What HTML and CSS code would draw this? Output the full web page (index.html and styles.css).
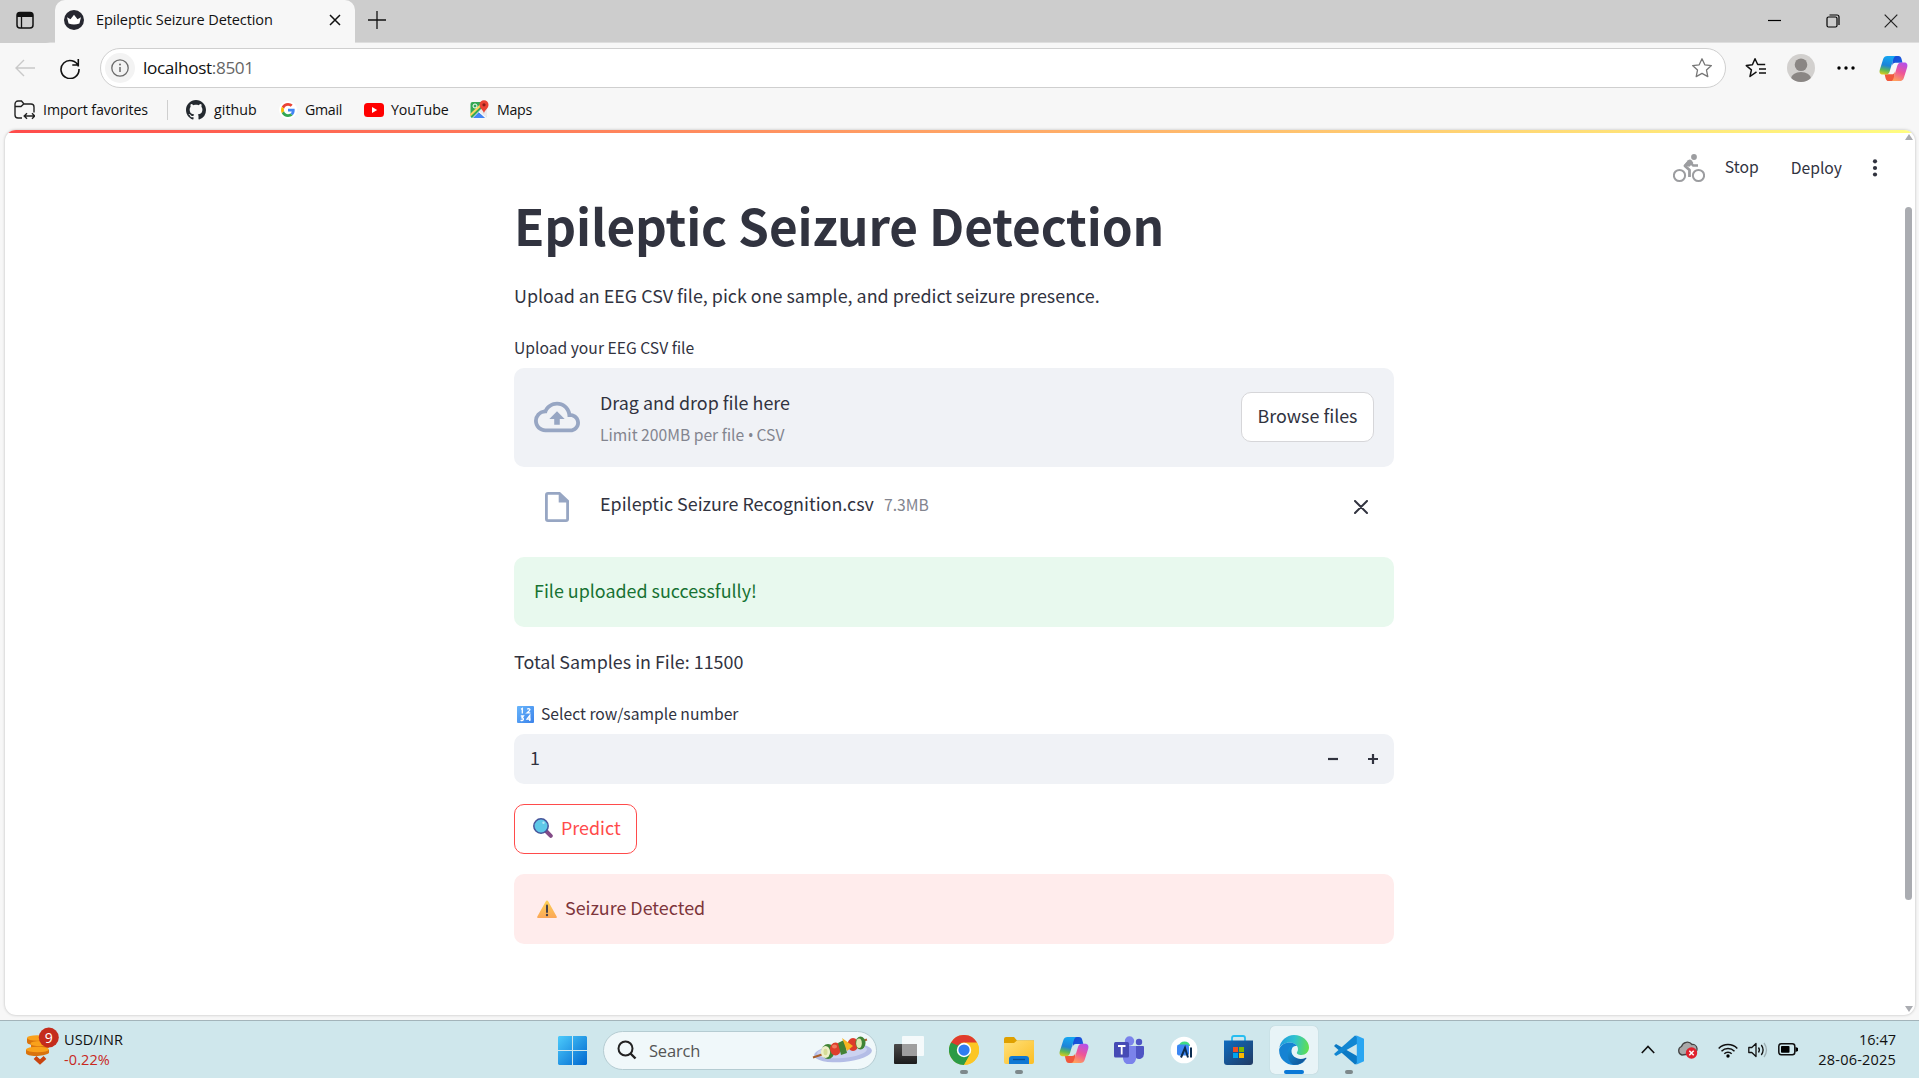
FILE: index.html
```html
<!DOCTYPE html>
<html lang="en">
<head>
<meta charset="utf-8">
<title>Epileptic Seizure Detection</title>
<link rel="stylesheet" href="styles.css">
</head>
<body>
<svg class="defs" width="0" height="0">
  <defs>
    <linearGradient id="cpA" x1="0.2" y1="0" x2="0" y2="1"><stop offset="0" stop-color="#15a4f0"/><stop offset=".45" stop-color="#1d83d8"/><stop offset=".72" stop-color="#5fb855"/><stop offset="1" stop-color="#f2cf14"/></linearGradient>
    <linearGradient id="cpB" x1="0.7" y1="0" x2="0.3" y2="1"><stop offset="0" stop-color="#b650e8"/><stop offset=".5" stop-color="#ee5697"/><stop offset="1" stop-color="#ffa25c"/></linearGradient>
    <linearGradient id="cpC" x1="0" y1="0" x2="1" y2="1"><stop offset="0" stop-color="#1749d6"/><stop offset="1" stop-color="#1a5fe0"/></linearGradient>
    <linearGradient id="win" x1="0" y1="0" x2="1" y2="1"><stop offset="0" stop-color="#4ccbfb"/><stop offset="1" stop-color="#0067cf"/></linearGradient>
    <linearGradient id="fold" x1="0" y1="0" x2="1" y2="1"><stop offset="0" stop-color="#ffe07a"/><stop offset="1" stop-color="#fcbe23"/></linearGradient>
    <linearGradient id="store" x1="0" y1="0" x2="1" y2="1"><stop offset="0" stop-color="#0f6cc0"/><stop offset="1" stop-color="#213a63"/></linearGradient>
    <linearGradient id="edgeT" x1="0" y1=".4" x2="1" y2=".5"><stop offset="0" stop-color="#1f9be0"/><stop offset=".5" stop-color="#2fc2cf"/><stop offset="1" stop-color="#62e04d"/></linearGradient>
    <linearGradient id="edgeB" x1="0" y1="0" x2="1" y2="1"><stop offset="0" stop-color="#1495df"/><stop offset="1" stop-color="#114a8b"/></linearGradient>
    <linearGradient id="dark" x1="0" y1="0" x2="0" y2="1"><stop offset="0" stop-color="#4a4a4a"/><stop offset="1" stop-color="#1c1c1c"/></linearGradient>
    <linearGradient id="num" x1="0" y1="0" x2="1" y2="1"><stop offset="0" stop-color="#68b5fb"/><stop offset="1" stop-color="#3b82ea"/></linearGradient>
    <linearGradient id="warn" x1="0" y1="0" x2="0" y2="1"><stop offset="0" stop-color="#fdd155"/><stop offset="1" stop-color="#fba757"/></linearGradient>
    <symbol id="copilot" viewBox="0 0 30 28">
      <path d="M14 1h6c2 0 2.800 1.300 3.300 3l1 4H17c-2 0-2.800 1-3.300 3z" fill="url(#cpC)"/>
      <path d="M16 27h-6c-2 0-2.600-1.300-3.200-3l-1-4H13c2 0 2.800-1 3.300-3z" fill="#f0583c"/>
      <path d="M8.500 1H18c-1.800 0-2.500 1.300-3.200 3.500L11 17c-.7 2.200-2 3.200-4 3.200H4c-3 0-4-2.200-3.200-5L4.300 4.200C5 2 6.500 1 8.500 1z" fill="url(#cpA)"/>
      <path d="M21.500 27H12c1.800 0 2.500-1.300 3.200-3.500L19 11c.7-2.200 2-3.200 4-3.200h3c3 0 4 2.200 3.200 5l-3.500 11C25 26 23.500 27 21.500 27z" fill="url(#cpB)"/>
    </symbol>
  </defs>
</svg>

<header class="tabbar">
  <div class="tab-actions"><svg width="20" height="20" viewBox="0 0 20 20"><rect x="2" y="2.500" width="16" height="15.500" rx="3" fill="none" stroke="#111" stroke-width="1.500"/><path d="M2 7V5a3 3 0 0 1 3-3h10a3 3 0 0 1 3 3v2z" fill="#111"/><path d="M6.500 6v12" stroke="#111" stroke-width="1.300"/></svg></div>
  <div class="tab">
    <svg class="favicon" width="20" height="20" viewBox="0 0 20 20"><circle cx="10" cy="10" r="10" fill="#262730"/><path d="M3 7.300l3.500 2L10 4.800l3.500 4.500 3.500-2-1.600 6.200q-5.400 1.800-10.800 0z" fill="#fff"/></svg>
    <span class="tab-title">Epileptic Seizure Detection</span>
    <svg class="tab-close" width="12" height="12" viewBox="0 0 12 12"><path d="M1 1l10 10M11 1L1 11" stroke="#111" stroke-width="1.500"/></svg>
  </div>
  <svg class="new-tab" width="18" height="18" viewBox="0 0 18 18"><path d="M9 0v18M0 9h18" stroke="#111" stroke-width="1.300"/></svg>
  <div class="window-buttons">
    <svg width="14" height="14" viewBox="0 0 14 14"><path d="M0 6.500h13" stroke="#000" stroke-width="1.200"/></svg>
    <svg width="14" height="14" viewBox="0 0 14 14"><rect x="1" y="3" width="10" height="10" rx="1.500" fill="none" stroke="#000" stroke-width="1.200"/><path d="M3.500 1H11a2 2 0 0 1 2 2v8" fill="none" stroke="#000" stroke-width="1.200"/></svg>
    <svg width="14" height="14" viewBox="0 0 14 14"><path d="M.7.7l12.600 12.600M13.300.7L.7 13.300" stroke="#222" stroke-width="1.200"/></svg>
  </div>
</header>

<div class="toolbar">
  <svg class="back" width="20" height="18" viewBox="0 0 20 18"><path d="M20 9H1M9 1L1 9l8 8" fill="none" stroke="#c9c9c9" stroke-width="1.400"/></svg>
  <svg class="reload" width="22" height="22" viewBox="0 0 22 22"><path d="M19.500 9.500A9 9 0 1 0 20 12M19.300 2v6h-6" fill="none" stroke="#111" stroke-width="1.600"/></svg>
  <div class="address">
    <span class="site-info"><svg width="18" height="18" viewBox="0 0 18 18"><circle cx="9" cy="9" r="8.200" fill="none" stroke="#6b6b6b" stroke-width="1.300"/><path d="M9 8v5" stroke="#6b6b6b" stroke-width="1.500"/><circle cx="9" cy="5.600" r="1" fill="#6b6b6b"/></svg></span>
    <span class="url">localhost<span class="port">:8501</span></span>
    <svg class="star" width="22" height="22" viewBox="0 0 22 22"><path d="M11 1.800l2.800 6 6.600.8-4.900 4.500 1.300 6.500-5.800-3.200-5.800 3.200 1.300-6.500L1.600 8.600l6.600-.8z" fill="none" stroke="#777" stroke-width="1.300" stroke-linejoin="round"/></svg>
  </div>
  <div class="toolbar-right">
    <svg class="fav-list" width="22" height="22" viewBox="0 0 22 22"><path d="M11.500 14.800L5 19.500l1.400-6.700L1.300 8.600l6.100-.8L10 1.800l2.700 5.700h7.500M14 12h7M14 16h7" fill="none" stroke="#111" stroke-width="1.500" stroke-linejoin="round"/></svg>
    <svg class="avatar" width="28" height="28" viewBox="0 0 28 28"><defs><clipPath id="av"><circle cx="14" cy="14" r="14"/></clipPath></defs><g clip-path="url(#av)"><rect width="28" height="28" fill="#d2d0ce"/><circle cx="14" cy="10.700" r="6.300" fill="#8a8684"/><ellipse cx="14" cy="24.500" rx="10" ry="6.500" fill="#8a8684"/></g></svg>
    <svg class="more" width="18" height="4" viewBox="0 0 18 4"><circle cx="2" cy="2" r="1.700"/><circle cx="9" cy="2" r="1.700"/><circle cx="16" cy="2" r="1.700"/></svg>
    <svg class="cp" width="29" height="27"><use href="#copilot"/></svg>
  </div>
</div>

<nav class="favorites">
  <span class="fav import"><svg width="21" height="20" viewBox="0 0 21 20"><path d="M8 18H4a3 3 0 0 1-3-3V4a3 3 0 0 1 3-3h3.500l2.500 3h7a3 3 0 0 1 3 3v5.500M1 6.500h6l2.700-2.500M10.500 16h10M13 13.200L10.200 16l2.800 2.800M18 13.200l2.800 2.800-2.800 2.800" fill="none" stroke="#222" stroke-width="1.400"/></svg><span>Import favorites</span></span>
  <i class="sep"></i>
  <span class="fav github"><svg width="20" height="20" viewBox="0 0 16 16"><path fill="#24292f" d="M8 0C3.580 0 0 3.580 0 8c0 3.540 2.290 6.530 5.470 7.590.4.070.55-.17.55-.38 0-.19-.01-.82-.01-1.490-2.010.37-2.530-.49-2.690-.94-.09-.23-.48-.94-.82-1.130-.28-.15-.68-.52-.01-.53.63-.01 1.080.58 1.230.82.72 1.210 1.870.87 2.330.66.070-.52.28-.87.51-1.070-1.780-.2-3.640-.89-3.640-3.950 0-.87.31-1.590.82-2.150-.08-.2-.36-1.020.08-2.120 0 0 .67-.21 2.200.82.64-.18 1.320-.27 2-.27s1.360.09 2 .27c1.530-1.040 2.200-.82 2.200-.82.44 1.100.16 1.920.08 2.120.51.56.82 1.270.82 2.150 0 3.070-1.870 3.750-3.650 3.950.29.25.54.73.54 1.480 0 1.070-.01 1.930-.01 2.200 0 .21.15.46.55.38A8.010 8.010 0 0 0 16 8c0-4.420-3.580-8-8-8z"/></svg><span>github</span></span>
  <span class="fav gmail"><svg width="18" height="18" viewBox="-7 -7 62 62"><circle cx="24" cy="24" r="31" fill="#fff"/><path fill="#ea4335" d="M24 9.500c3.540 0 6.710 1.220 9.210 3.600l6.850-6.850C35.900 2.380 30.470 0 24 0 14.620 0 6.510 5.380 2.560 13.220l7.980 6.190C12.430 13.720 17.740 9.500 24 9.500z"/><path fill="#4285f4" d="M46.980 24.550c0-1.570-.15-3.090-.38-4.550H24v9.020h12.940c-.58 2.960-2.260 5.480-4.780 7.180l7.730 6c4.510-4.180 7.090-10.360 7.090-17.650z"/><path fill="#fbbc05" d="M10.530 28.590c-.48-1.450-.76-2.990-.76-4.590s.27-3.140.76-4.590l-7.980-6.190C.92 16.460 0 20.120 0 24c0 3.880.92 7.540 2.560 10.780l7.970-6.190z"/><path fill="#34a853" d="M24 48c6.480 0 11.930-2.130 15.890-5.810l-7.730-6c-2.150 1.450-4.920 2.300-8.160 2.300-6.260 0-11.570-4.220-13.470-9.910l-7.980 6.190C6.510 42.620 14.620 48 24 48z"/></svg><span>Gmail</span></span>
  <span class="fav youtube"><svg width="20" height="14" viewBox="0 0 20 14"><rect width="20" height="14" rx="3.500" fill="#f00"/><path d="M8 4l5.200 3L8 10z" fill="#fff"/></svg><span>YouTube</span></span>
  <span class="fav maps"><svg width="19" height="19" viewBox="0 0 19 19"><rect x=".5" y="2" width="16" height="16" rx="2" fill="#34a853"/><path d="M2 18L14 6l3 3v7a2 2 0 0 1-2 2z" fill="#e8eaed"/><path d="M3 18l6-6 6 6z" fill="#4285f4"/><path d="M0 15.500L13 3" stroke="#fdd663" stroke-width="2"/><path d="M9 12l7.500 6" stroke="#fff" stroke-width="1"/><circle cx="5" cy="6" r="2" fill="none" stroke="#fff"/><path d="M14 14c0-4-4.500-5-4.500-9.200a4.500 4.500 0 0 1 9 0C18.500 9 14 10 14 14z" fill="#ea4335"/><circle cx="14" cy="4.800" r="1.600" fill="#8c1d18"/></svg><span>Maps</span></span>
</nav>

<main class="viewport">
  <div class="progress"></div>
  <div class="scrollbar"><i class="up"></i><i class="thumb"></i><i class="down"></i></div>
  <div class="app-header">
    <svg class="bike" width="32" height="29" viewBox="0 0 32 29"><g fill="none" stroke="#9c9da0"><circle cx="6.500" cy="21.500" r="5.600" stroke-width="2"/><circle cx="25.500" cy="21.500" r="5.600" stroke-width="2"/><path d="M16.500 7.500L12 12l4.500 4V23" stroke-width="2.800" stroke-linejoin="round"/><path d="M16.500 7L20 11.500h5" stroke-width="2.500" stroke-linejoin="round"/></g><path d="M10.500 11.500L15 6.200q2-1.700 3.800.3l1.500 2.500-4 3.800z" fill="#9c9da0"/><circle cx="21" cy="3" r="2.900" fill="#9c9da0"/></svg>
    <span class="stop">Stop</span>
    <span class="deploy">Deploy</span>
    <svg class="kebab" width="6" height="18" viewBox="0 0 6 18"><circle cx="3" cy="2.300" r="2.100"/><circle cx="3" cy="9" r="2.100"/><circle cx="3" cy="15.500" r="2.100"/></svg>
  </div>
  <section class="app">
    <h1>Epileptic Seizure Detection</h1>
    <p class="intro">Upload an EEG CSV file, pick one sample, and predict seizure presence.</p>
    <label class="field-label">Upload your EEG CSV file</label>
    <div class="dropzone">
      <svg width="46" height="46" viewBox="0 0 24 24"><path fill="#97a6c3" d="M19.350 10.040A7.490 7.490 0 0 0 12 4C9.110 4 6.600 5.640 5.350 8.040A5.994 5.994 0 0 0 0 14c0 3.310 2.690 6 6 6h13c2.760 0 5-2.240 5-5 0-2.640-2.050-4.780-4.650-4.960zM19 18H6c-2.210 0-4-1.790-4-4s1.790-4 4-4h.71C7.370 7.690 9.480 6 12 6c3.040 0 5.500 2.460 5.500 5.500v.5H19c1.660 0 3 1.340 3 3s-1.340 3-3 3zM8 13h2.550v3h2.900v-3H16l-4-4z"/></svg>
      <div class="drop-text"><span class="drop-main">Drag and drop file here</span><span class="drop-limit">Limit 200MB per file <span class="bullet">•</span> CSV</span></div>
      <button class="btn browse">Browse files</button>
    </div>
    <div class="file-row">
      <svg width="24" height="30" viewBox="0 0 24 30"><path d="M3 0h12l9 8.500V27a3 3 0 0 1-3 3H3a3 3 0 0 1-3-3V3a3 3 0 0 1 3-3zm-.2 2.800v24.400h18.400V10.500h-7.500V2.800z" fill="#97a6c3" fill-rule="evenodd"/></svg>
      <span class="file-name">Epileptic Seizure Recognition.csv</span>
      <span class="file-size">7.3MB</span>
      <svg class="remove" width="14" height="14" viewBox="0 0 14 14"><path d="M1 1l12 12M13 1L1 13" stroke="#31333f" stroke-width="2" stroke-linecap="round"/></svg>
    </div>
    <div class="alert success"><span>File uploaded successfully!</span></div>
    <p class="total">Total Samples in File: 11500</p>
    <label class="field-label row-label"><svg width="17" height="17" viewBox="0 0 17 17"><rect width="17" height="17" rx="1" fill="url(#num)"/><g fill="none" stroke="#fff" stroke-width="1.300"><path d="M4 3.200l1.300-.8V7.500M10.200 3.300q1.500-1.400 2.700 0 .4 1-2.900 3.600h3.300M3.800 10h2.600L5 11.800q1.800.2 1.300 1.800-.9 1.500-2.700.5M12.800 15v-5.500L10 13.200h3.700"/></g></svg><span>Select row/sample number</span></label>
    <div class="number-input"><span>1</span>
      <svg class="minus" width="10" height="10" viewBox="0 0 10 10"><path d="M0 5h10" stroke="#31333f" stroke-width="2.200"/></svg>
      <svg class="plus" width="10" height="10" viewBox="0 0 10 10"><path d="M0 5h10M5 0v10" stroke="#31333f" stroke-width="2.200"/></svg>
    </div>
    <button class="btn predict"><svg width="20" height="20" viewBox="0 0 20 20"><path d="M13.500 13.500l4.300 4.300" stroke="#824a86" stroke-width="4" stroke-linecap="round"/><circle cx="8" cy="8" r="7.200" fill="#5ec8e8" stroke="#46549a" stroke-width="1.500"/><circle cx="10.500" cy="4.800" r="1.200" fill="#b4eaf8"/></svg><span>Predict</span></button>
    <div class="alert error"><svg width="20" height="18" viewBox="0 0 20 18"><path d="M10 .5q.8 0 1.300 1l8.500 15.300q.3 1.200-.8 1.200H1q-1.100 0-.8-1.200L8.700 1.500Q9.200.5 10 .5z" fill="url(#warn)"/><path d="M10 5.500v6.500" stroke="#45404b" stroke-width="2" stroke-linecap="round"/><circle cx="10" cy="15" r="1.200" fill="#45404b"/></svg><span>Seizure Detected</span></div>
  </section>
</main>

<footer class="taskbar">
  <div class="widgets">
    <svg width="34" height="38" viewBox="0 0 34 38"><g fill="#d9730d"><path d="M1 11v4c0 4 14 4 18 1v-5z"/><path d="M5 16.500v4c0 4 14 4 18 0v-4z"/><path d="M0 22.500v3.500c0 4 18 4 23 0v-3.500z"/></g><g fill="#f9a11b"><ellipse cx="11" cy="11" rx="10" ry="2.700"/><ellipse cx="14" cy="16.700" rx="9.500" ry="2.600"/><ellipse cx="11.500" cy="22.500" rx="11.500" ry="2.800"/></g><path d="M9 30.500l5 4.500 5-4.500" fill="none" stroke="#c9440f" stroke-width="4"/><circle cx="22.800" cy="10.500" r="10" fill="#c42b1c"/><text x="22.800" y="16" text-anchor="middle" class="badge-text">9</text></svg>
    <div class="rate"><span>USD/INR</span><span class="down-rate">-0.22%</span></div>
  </div>
  <div class="apps">
    <span class="app-cell start"><svg width="29" height="29" viewBox="0 0 29 29"><path d="M1 0h13v14H0V1zM15 0h13l1 1v13H15zM0 15h14v14H1l-1-1zM15 15h14v13l-1 1H15z" fill="url(#win)"/></svg></span>
    <div class="search">
      <svg width="20" height="20" viewBox="0 0 20 20"><circle cx="8.500" cy="8.500" r="7" fill="none" stroke="#222" stroke-width="2"/><path d="M13.500 13.500l5 5" stroke="#222" stroke-width="2.400"/></svg>
      <span>Search</span>
      <svg class="food" width="62" height="30" viewBox="0 0 62 30"><ellipse cx="32" cy="18" rx="29" ry="9" fill="#b4bde6" transform="rotate(-5 32 18)"/><ellipse cx="31" cy="16.500" rx="25" ry="6.500" fill="#cbd2f0" transform="rotate(-5 31 16)"/><path d="M2 22.500L56 4.500" stroke="#a9602c" stroke-width="2"/><ellipse cx="17" cy="16.500" rx="6.500" ry="7.500" fill="#3f8434"/><ellipse cx="14.500" cy="17" rx="4.600" ry="6" fill="#eef0ca"/><ellipse cx="14.500" cy="17" rx="2" ry="3.200" fill="#d5dc98"/><ellipse cx="24.500" cy="14" rx="5.500" ry="6.500" fill="#df3d2c"/><ellipse cx="23.500" cy="11.500" rx="2.500" ry="2" fill="#f07a60"/><path d="M27 8l6-3 3 13-6 2z" fill="#438234"/><ellipse cx="42" cy="9.500" rx="5.500" ry="6.500" fill="#dc3b2c"/><path d="M31 3l11 8-6 5z" fill="#f7b522"/><ellipse cx="49.500" cy="8" rx="5" ry="6.500" fill="#3f8434"/><ellipse cx="48" cy="8.200" rx="2.800" ry="4.800" fill="#dfe9b5"/></svg>
    </div>
    <span class="app-cell taskview"><svg width="30" height="28" viewBox="0 0 30 28"><rect y="8" width="23" height="20" rx="1" fill="url(#dark)"/><rect x="8" width="22" height="20" rx="1" fill="#fff" opacity=".78"/><path d="M8 8h15v12H8z" fill="#8c8c8c" opacity=".75"/></svg></span>
    <span class="app-cell running"><svg width="30" height="30" viewBox="0 0 48 48"><circle cx="24" cy="24" r="24" fill="#fcc625"/><path d="M3.200 12A24 24 0 0 0 24 48l10.400-18L24 24V13z" fill="#2b9b46"/><path d="M24 48l10.400-18A12 12 0 0 0 34 17.500L44.800 12A24 24 0 0 1 24 48z" fill="#fcc625"/><path d="M3.200 12A24 24 0 0 1 44.800 12H24a12 12 0 0 0-11 8z" fill="#e03b2e"/><path d="M3.200 12l10.400 18 3-12z" fill="#2b9b46"/><circle cx="24" cy="24" r="11.500" fill="#fff"/><circle cx="24" cy="24" r="9" fill="#2f7cf0"/></svg></span>
    <span class="app-cell running"><svg width="30" height="27" viewBox="0 0 30 27"><path d="M0 9V2q0-2 2-2h8l3 3.500H30V9z" fill="#dfa000"/><path d="M0 6h10l3-2.500h16q1 0 1 1V25q0 2-2 2H2q-2 0-2-2z" fill="url(#fold)"/><path d="M5 27v-5q0-3 3-3h14q3 0 3 3v5z" fill="#0f78d4"/><path d="M9 22.500h12" stroke="#0b4f94" stroke-width="1.300"/></svg></span>
    <span class="app-cell"><svg width="30" height="28"><use href="#copilot"/></svg></span>
    <span class="app-cell"><svg width="30" height="28" viewBox="0 0 30 28"><circle cx="25" cy="6" r="3.200" fill="#4f55c4"/><path d="M20 10h9q1 0 1 1v7a5 5 0 0 1-8 4z" fill="#4f55c4"/><circle cx="15.500" cy="5" r="4.700" fill="#7b83eb"/><path d="M9 10h13v10a6.500 7 0 0 1-13 3z" fill="#7b83eb"/><rect y="6" width="15" height="15.500" rx="1.500" fill="#464bb5"/><path d="M4 10h7.500M7.700 10v8.500" stroke="#fff" stroke-width="1.800"/></svg></span>
    <span class="app-cell"><svg width="28" height="28" viewBox="0 0 28 28"><circle cx="14" cy="14" r="13.300" fill="#fff"/><path d="M9 10a5.500 4.500 0 0 1 11 0z" fill="#3ddc84"/><rect x="7" y="8.500" width="12" height="11" rx="2" fill="#3c87f3"/><path d="M11 21.500l4-9.500 3 9.500M21 11.500v10" fill="none" stroke="#0b2c50" stroke-width="2"/></svg></span>
    <span class="app-cell store"><svg width="29" height="30" viewBox="0 0 29 30"><path d="M8 7V3q0-2 2-2h9q2 0 2 2v4" fill="none" stroke="#26bdf0" stroke-width="1.800"/><path d="M0 5.500h29V27q0 3-3 3H3q-3 0-3-3z" fill="url(#store)"/><path d="M9 12h5v5H9z" fill="#f25022"/><path d="M15 12h5v5h-5z" fill="#7fba00"/><path d="M9 18h5v5H9z" fill="#00a4ef"/><path d="M15 18h5v5h-5z" fill="#ffb900"/></svg></span>
    <span class="app-cell running active"><svg width="30" height="30" viewBox="0 0 30 30"><path d="M.3 13A15 15 0 0 1 15 0c8.500 0 15 6 15 12.500 0 4.500-3.500 7.500-7.500 7.500-3.500 0-5.200-1.500-4.500-2.700C21 13 17 7.500 11 7.500 6 7.500 1.500 10 .3 13z" fill="url(#edgeT)"/><path d="M.2 14C2 9.500 6.500 7.500 11 7.500c3 0 5.600 1.300 7 3.600-4.500-1-7.500 2.400-7.500 6.400 0 5.500 4.500 9.500 9.500 9.500 2.400 0 4.500-.7 6.200-1.600A14.800 14.800 0 0 1 15 30C6.500 30-.7 23 .2 14z" fill="#1583d3"/><path d="M10.500 12.500C7 17 8 26 14 29.800a15 15 0 0 0 13.200-6c.6-.9-.1-1.300-.9-.9C20 26 12 22 12.500 15.500c.2-2.500 1.500-4 3-4.600-2-.5-3.800.2-5 1.600z" fill="url(#edgeB)"/></svg></span>
    <span class="app-cell running"><svg width="30" height="30" viewBox="0 0 30 30"><path d="M2 9L0 11l21 18.500 2-1V21z" fill="#0b79c4"/><path d="M2 21L0 19 21 .5l2 1V9z" fill="#1186d2"/><path d="M21.500 0L30 3.800v22.400L21.500 30q1.300-.6 1.300-2V2q0-1.400-1.300-2z" fill="#2aa6f2"/></svg></span>
  </div>
  <div class="tray">
    <svg class="chev" width="14" height="9" viewBox="0 0 14 9"><path d="M.8 8L7 1.500 13.200 8" fill="none" stroke="#111" stroke-width="1.600"/></svg>
    <svg class="cloud" width="21" height="18" viewBox="0 0 21 18"><path d="M5 14a4.500 4.500 0 0 1-.5-8.500A6 6 0 0 1 15 3.500a4.500 4.500 0 0 1 1 9z" fill="#a9a9a9" stroke="#444" stroke-width="1.300"/><circle cx="14.500" cy="12" r="5.700" fill="#e0222e"/><path d="M12.300 9.800l4.400 4.400M16.700 9.800l-4.400 4.400" stroke="#fff" stroke-width="1.500"/></svg>
    <svg class="wifi" width="20" height="16" viewBox="0 0 20 16"><g fill="none" stroke="#111" stroke-width="1.500"><path d="M.7 6.500a13 13 0 0 1 18.600 0M3.500 9.200a9.300 9.300 0 0 1 13 0M6.300 11.800a5.300 5.300 0 0 1 7.400 0"/></g><circle cx="10" cy="14" r="1.700"/></svg>
    <svg class="sound" width="21" height="16" viewBox="0 0 21 16"><path d="M.8 5.500h3L8 1.500v13l-4.200-4h-3z" fill="none" stroke="#111" stroke-width="1.300" stroke-linejoin="round"/><path d="M10.500 5.500q1.800 2.500 0 5M13.300 3q3.600 5 0 10" fill="none" stroke="#111" stroke-width="1.300"/><path d="M16 1q5 7 0 14" fill="none" stroke="#9fb0b4" stroke-width="1.300"/></svg>
    <svg class="battery" width="20" height="13" viewBox="0 0 20 13"><rect x=".8" y=".8" width="16" height="11" rx="2.500" fill="none" stroke="#111" stroke-width="1.500"/><rect x="3" y="3" width="8.500" height="6.800" rx=".8"/><path d="M17.500 4l2.500 1v3l-2.500 1z"/></svg>
    <div class="clock"><span>16:47</span><span class="date">28-06-2025</span></div>
  </div>
</footer>
</body>
</html>
```

FILE: styles.css
```css
* { box-sizing: border-box; }

body {
  margin: 0;
  width: 1919px;
  height: 1078px;
  overflow: hidden;
  display: flex;
  flex-direction: column;
  background: #f7f7f7;
  font-family: "Open Sans", "Noto Sans", sans-serif;
  color: #111;
}

.defs { position: absolute; }
svg { display: block; flex: none; }
button { font: inherit; border: 0; background: none; padding: 0; }

/* Browser tab strip */
.tabbar {
  height: 43px;
  flex: none;
  display: flex;
  background: #f7f7f7;
  background-image: linear-gradient(#cdcdcd 42px, #dedede 42px);
}
.tab-actions { width: 55px; padding: 10px 0 0 15px; background: #cdcdcd; border-radius: 0 0 9px 0; }
.tab {
  width: 300px;
  height: 43px;
  background: #f7f7f7;
  border-radius: 10px 10px 0 0;
  display: flex;
  align-items: center;
  padding: 0 14px 3px 9px;
}
.tab-title { margin: -2px 0 0 12px; font-size: 14.5px; letter-spacing: -0.1px; white-space: nowrap; }
.tab-close { margin-left: auto; }
.new-tab { margin: 11px 0 0 13px; }
.window-buttons { margin-left: auto; display: flex; gap: 44px; padding: 14px 21px 0 0; }

/* Address bar row */
.toolbar { height: 49px; flex: none; display: flex; align-items: center; padding: 1px 11px 0 15px; }
.reload { margin-left: 24px; }
.address {
  width: 1626px;
  height: 40px;
  margin-left: 19px;
  border: 1px solid #cfcfcf;
  border-radius: 20px;
  background: #fff;
  display: flex;
  align-items: center;
  padding: 0 12px 0 4px;
}
.site-info { width: 30px; height: 30px; border-radius: 50%; background: #f3f3f3; display: grid; place-items: center; }
.url { margin: -2px 0 0 8px; font-size: 17.2px; letter-spacing: -0.36px; }
.port { color: #666; }
.star { margin-left: auto; }
.toolbar-right { display: flex; align-items: center; margin-left: 19px; }
.avatar { margin-left: 20px; }
.more { margin-left: 22px; }
.cp { margin-left: 24px; }

/* Favorites row */
.favorites { height: 38px; flex: none; display: flex; align-items: center; padding: 0 0 3px 14px; font-size: 14.2px; letter-spacing: -0.3px; }
.fav { display: flex; align-items: center; white-space: nowrap; }
.import { width: 153px; gap: 8px; letter-spacing: -0.08px; }
.sep { width: 1px; height: 20px; background: #cfcfcf; }
.github { width: 93px; gap: 8px; margin-left: 18px; letter-spacing: 0.05px; }
.gmail { width: 85px; gap: 8px; }
.youtube { width: 106px; gap: 7px; letter-spacing: -0.1px; }
.maps { gap: 8px; }

/* Page frame */
.viewport {
  position: relative;
  width: 1910px;
  height: 885px;
  margin-left: 5px;
  flex: none;
  overflow: hidden;
  border-radius: 11px;
  background: #fff;
  box-shadow: 0 0 3px rgba(0, 0, 0, .25);
  color: #31333f;
  font-family: "Noto Sans CJK SC", "Noto Sans", sans-serif;
}
.progress { height: 3px; background: linear-gradient(90deg, #ff4b4b, #fffd80); }
.scrollbar {
  position: absolute;
  top: 4px;
  right: 2px;
  height: 878px;
  width: 8px;
  display: flex;
  flex-direction: column;
}
.up, .down { border: 4px solid transparent; width: 0; height: 0; flex: none; }
.up { border-top: 0; border-bottom: 6px solid #aaacb1; }
.down { border-bottom: 0; border-top: 6px solid #aaacb1; margin-top: auto; }
.thumb { width: 7px; height: 693px; margin-top: 67px; border-radius: 4px; background: #aaacb1; flex: none; }
.app-header {
  position: absolute;
  top: 22px;
  right: 37px;
  height: 32px;
  display: flex;
  align-items: center;
  font-size: 15.7px;
  line-height: 26px;
}
.stop { margin: -2px 0 0 20px; }
.deploy { margin: -1px 30px 0 32px; }
.kebab { fill: #31333f; }

.app { width: 880px; margin: 0 auto 0 509px; padding-top: 59px; font-size: 17.9px; line-height: 32px; display: flex; flex-direction: column; }
h1 { margin: 0 0 21px; font-size: 49.5px; line-height: 66px; font-weight: 700; letter-spacing: -0.13px; white-space: nowrap; }
p { margin: 0; }
.intro { margin-bottom: 24px; }
.field-label { font-size: 15.68px; line-height: 26px; margin-bottom: 7px; }
.dropzone {
  height: 99px;
  border-radius: 10px;
  background: #f0f2f6;
  display: flex;
  align-items: center;
  padding: 0 20px 2px;
}
.drop-text { display: flex; flex-direction: column; margin-left: 20px; }
.drop-limit { font-size: 15.68px; line-height: 28px; margin-top: 3px; margin-bottom: -1px; color: #83858f; }
.bullet { font-family: "Open Sans", sans-serif; letter-spacing: -0.6px; }
.btn { height: 50px; border: 1px solid #d6d6d9; border-radius: 10px; background: #fff; color: inherit; display: flex; align-items: center; }
.browse { margin-left: auto; width: 133px; justify-content: center; padding-bottom: 3px; }
.file-row { height: 90px; display: flex; align-items: center; padding: 0 26px 11px 31px; }
.file-name { margin: -7px 0 0 31px; }
.file-size { margin: -4px 0 0 10px; font-size: 15.68px; color: #83858f; }
.remove { margin-left: auto; }
.alert { height: 70px; border-radius: 10px; padding: 0 20px; display: flex; align-items: center; }
.alert span, .predict span, .number-input span { margin-top: -5px; }
.alert.success { background: #e8f9ee; color: #177233; }
.total { margin: 18px 0 24px; }
.row-label { display: flex; align-items: center; gap: 7px; padding-left: 3px; margin-bottom: 7px; }
.number-input { height: 50px; border-radius: 10px; background: #f0f2f6; display: flex; align-items: center; padding: 0 16px; }
.minus { margin-left: auto; }
.plus { margin-left: 30px; }
.predict { width: 123px; margin: 20px 0; border-color: #ff4b4b; color: #ff4b4b; padding-left: 18px; gap: 8px; }
.predict svg { margin-top: -2px; }
.alert.error { background: #ffecec; color: #7d353b; padding-left: 23px; gap: 8px; }

/* Taskbar */
.taskbar {
  height: 58px;
  margin-top: 5px;
  flex: none;
  border-top: 1px solid #a3b4ba;
  background: #cfe7ec;
  display: flex;
  font-size: 14.5px;
}
.widgets { width: 545px; display: flex; padding: 6px 0 0 26px; }
.badge-text { fill: #fff; font-size: 14px; }
.rate { display: flex; flex-direction: column; line-height: 20px; padding-top: 3px; margin-left: 4px; letter-spacing: 0.1px; }
.down-rate { color: #c8281e; }
.apps { display: flex; align-items: center; height: 58px; }
.app-cell { width: 48px; height: 48px; margin-right: 7px; display: grid; place-items: center; position: relative; border-radius: 5px; }
.start { margin: 0 7px 0 3px; }
.search {
  width: 274px;
  height: 39px;
  border-radius: 20px;
  border: 1px solid #b5ccd2;
  background: #f0f8fa;
  display: flex;
  align-items: center;
  padding: 0 3px 0 13px;
  font-size: 16.5px;
  color: #555;
  letter-spacing: -0.2px;
}
.search span { margin-left: 12px; }
.food { margin-left: auto; }
.taskview { margin-left: 8px; }
.store { padding-right: 1px; }
.active { background: #e8f4f7; box-shadow: 0 0 1px rgba(0, 0, 0, .2); }
/* Indicator under a running app's icon */
.running::after { content: ""; position: absolute; left: 20px; bottom: 0; width: 8px; height: 4px; border-radius: 2px; background: #7d888b; }
.active::after { left: 14px; width: 20px; background: #0a78d6; }
.tray { margin-left: auto; display: flex; align-items: center; padding-right: 23px; }
.cloud { margin-left: 22px; }
.wifi { margin-left: 20px; }
.sound { margin-left: 10px; }
.battery { margin-left: 9px; }
.clock { width: 98px; display: flex; flex-direction: column; align-items: flex-end; line-height: 20px; letter-spacing: 0; margin-top: 1px; }
.date { letter-spacing: 0.2px; }
```
